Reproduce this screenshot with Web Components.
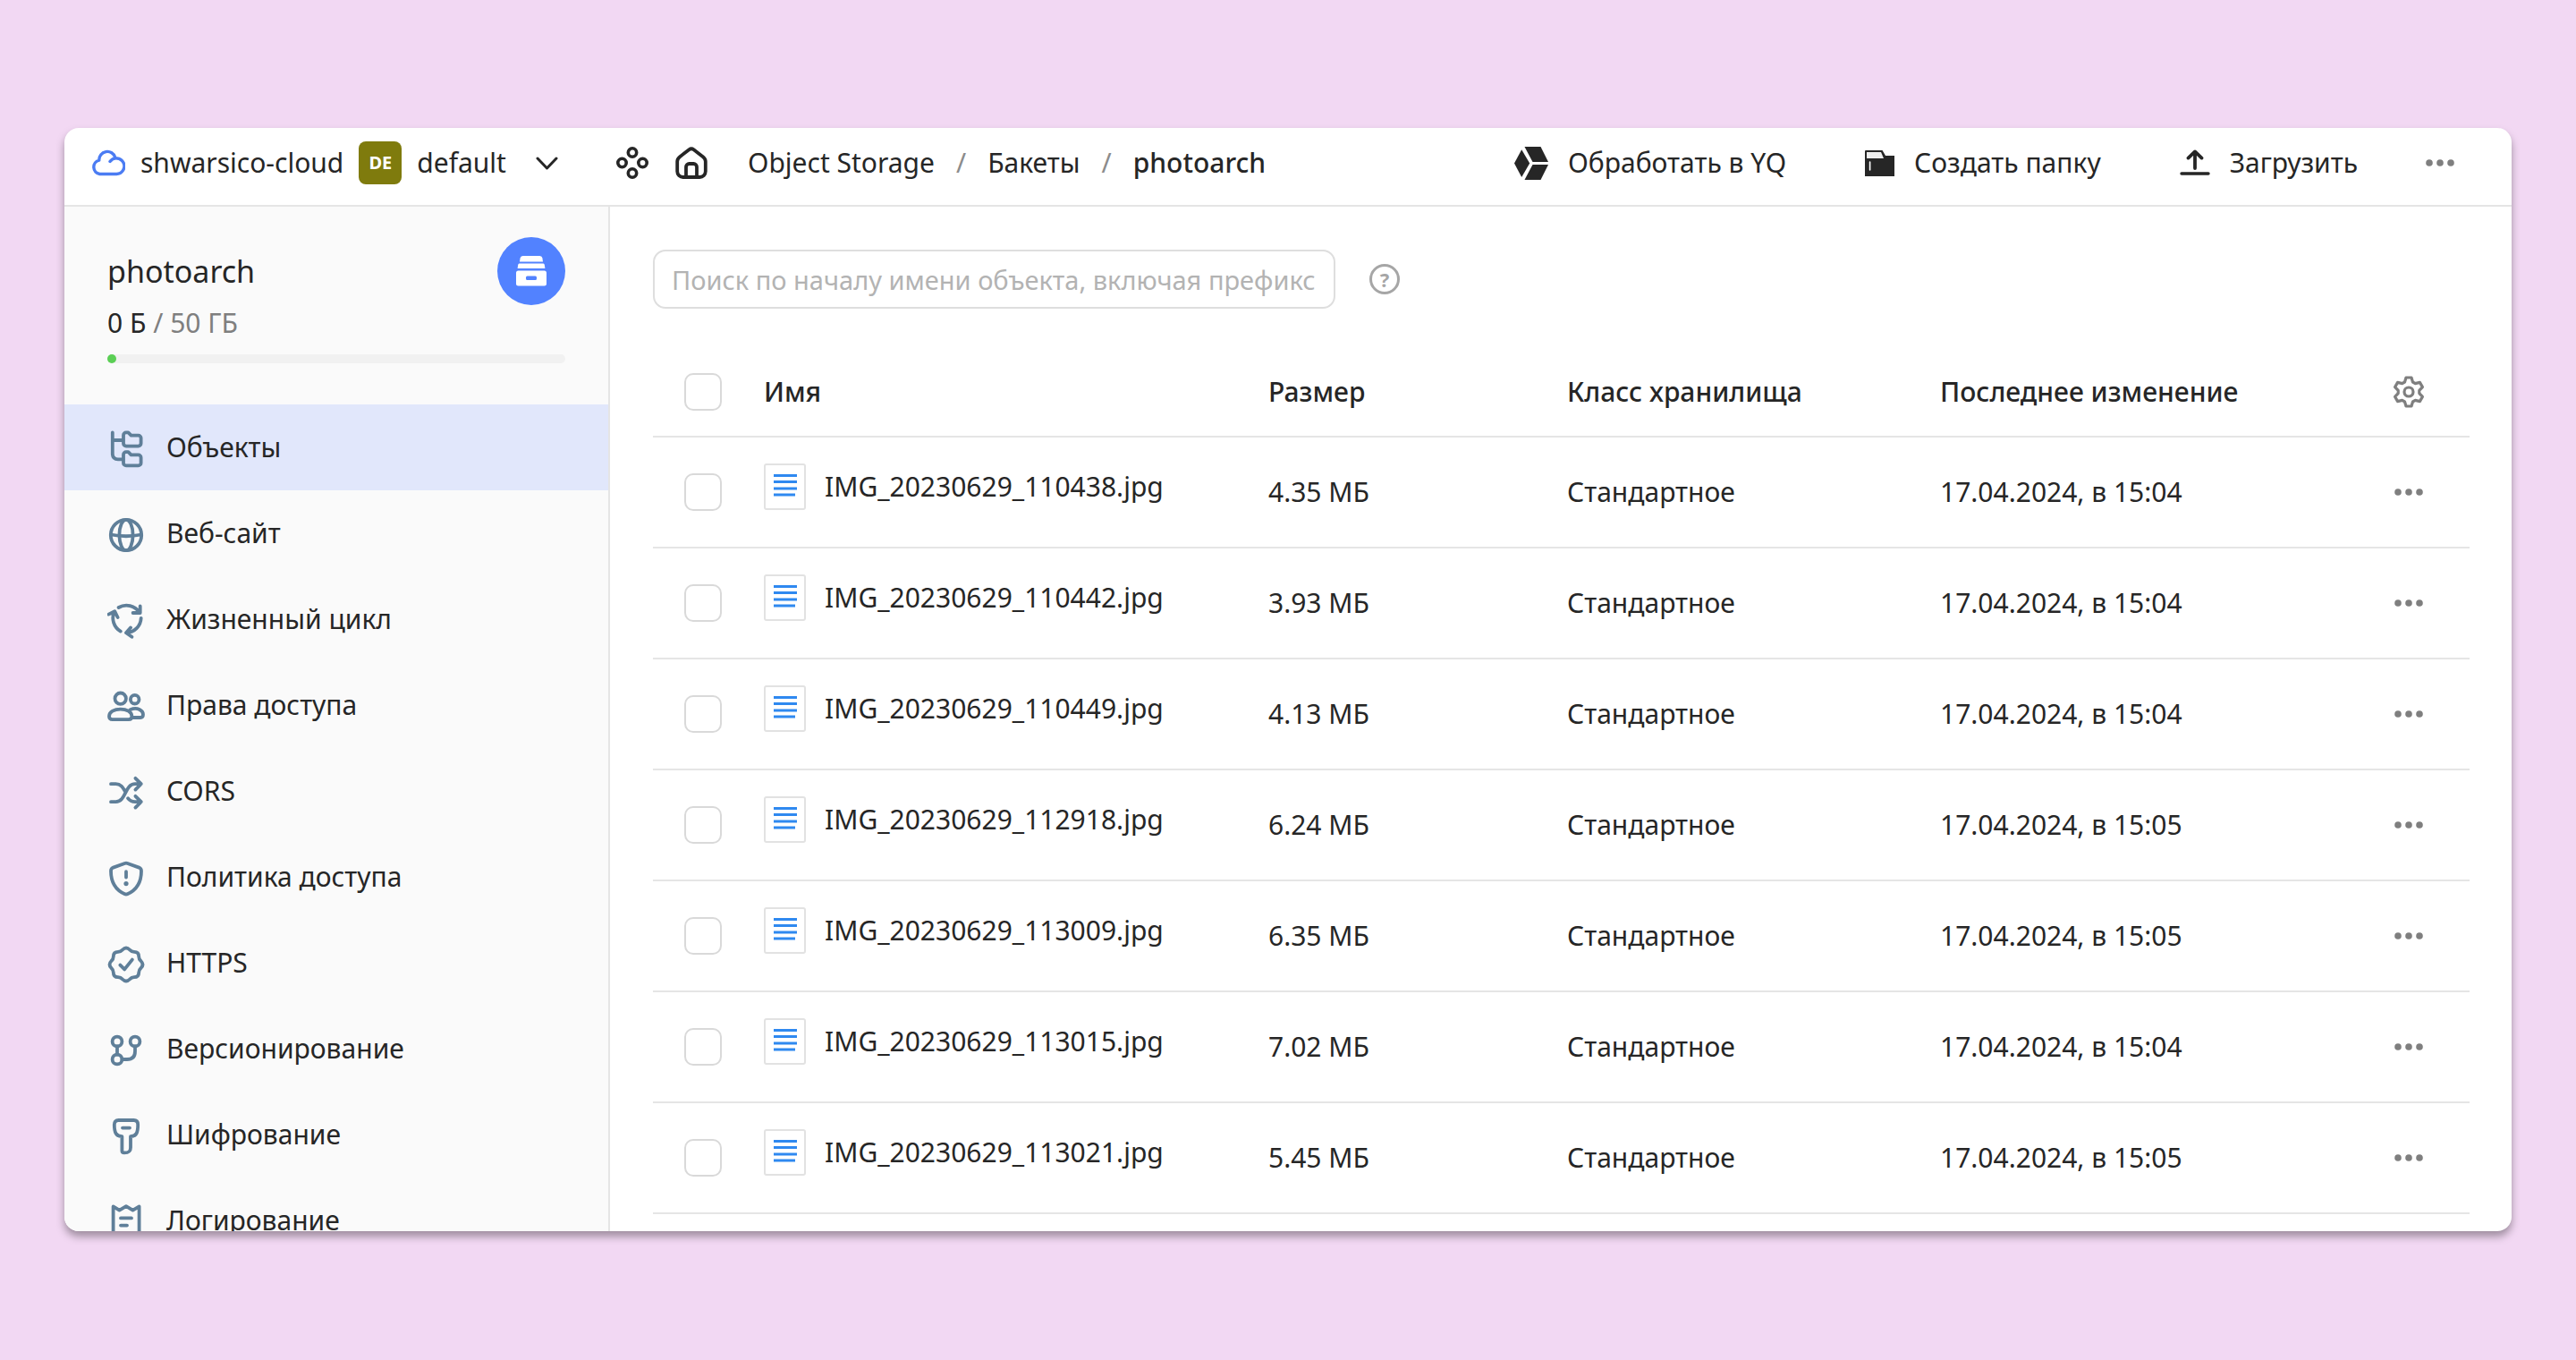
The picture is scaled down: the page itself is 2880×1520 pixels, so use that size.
<!DOCTYPE html>
<html lang="ru">
<head>
<meta charset="utf-8">
<meta name="viewport" content="width=device-width, initial-scale=1">
<title>photoarch — Object Storage</title>
<style>
    * { box-sizing: border-box; }

    body {
        margin: 0;
        min-height: 100vh;
        padding: 143px 72px 144px;
        background: #f2d8f3;
        color: #262626;
        font: 400 30px/40px "Noto Sans", "Open Sans", sans-serif;
        --line: #e5e5e5;
        --muted: #7f7f7f;
        --icon: #5f7f99;
    }
</style>
</head>
<body>

<storage-window>
    <console-header slot="header">
        <a slot="cloud" href="#cloud">shwarsico-cloud</a>
        <a slot="folder" href="#folder">default</a>
        <crumb-item href="#storage">Object Storage</crumb-item>
        <crumb-item href="#buckets">Бакеты</crumb-item>
        <crumb-item current>photoarch</crumb-item>
        <action-button slot="actions" icon="cube">Обработать в YQ</action-button>
        <action-button slot="actions" icon="folder">Создать папку</action-button>
        <action-button slot="actions" icon="upload">Загрузить</action-button>
    </console-header>

    <bucket-sidebar slot="sidebar" name="photoarch" used="0 Б" total="50 ГБ">
        <nav-item icon="tree" href="#objects" active>Объекты</nav-item>
        <nav-item icon="globe" href="#website">Веб-сайт</nav-item>
        <nav-item icon="cycle" href="#lifecycle">Жизненный цикл</nav-item>
        <nav-item icon="people" href="#access">Права доступа</nav-item>
        <nav-item icon="shuffle" href="#cors">CORS</nav-item>
        <nav-item icon="shield" href="#policy">Политика доступа</nav-item>
        <nav-item icon="badge" href="#https">HTTPS</nav-item>
        <nav-item icon="branch" href="#versioning">Версионирование</nav-item>
        <nav-item icon="key" href="#encryption">Шифрование</nav-item>
        <nav-item icon="log" href="#logging">Логирование</nav-item>
    </bucket-sidebar>

    <object-search></object-search>
    <object-table></object-table>
</storage-window>

<script>
// width, height, markup
const ICONS = {
    cloud: [38, 30, '<path stroke-width="3.4" d="M21 13.5A8.8 8.8 0 1 1 28 27.5H9.5A7.8 7.8 0 0 1 8.8 12.2A9.2 9.2 0 0 1 26.8 9"/>'],
    chevron: [25, 15, '<path stroke-width="3" d="M2 2 12.5 13 23 2"/>'],
    services: [36, 36, '<g stroke-width="3.6"><circle cx="18" cy="6.5" r="4.7"/><circle cx="6.5" cy="18" r="4.7"/><circle cx="29.5" cy="18" r="4.7"/><circle cx="18" cy="29.5" r="4.7"/></g>'],
    home: [36, 36, '<path stroke-width="3.8" d="M15.4 3.2Q18 1.2 20.6 3.2L31.2 11.4Q33.8 13.4 33.8 16.6V27.5A6.5 6.5 0 0 1 27.3 34H8.7A6.5 6.5 0 0 1 2.2 27.5V16.6Q2.2 13.4 4.8 11.4ZM12 34V22.5A3.5 3.5 0 0 1 15.5 19H20.5A3.5 3.5 0 0 1 24 22.5V34"/>'],
    cube: [38, 37, '<g fill="currentColor" stroke="none"><path d="M0 18.5 8.2 3.2 17.2 18.5 8.2 34Z"/><path d="M11.5 0H29.5L38 17H20.5Z"/><path d="M20.5 20H38L29.5 37H11.5Z"/></g>'],
    folder: [33, 29, '<path fill="currentColor" stroke="none" d="M0 1Q0 0 1 0H19.5L23 6H33V29H0Z"/><path fill="#eee" stroke="none" d="M2 2H18L21 9H2Z"/><path stroke="#fff" stroke-width="1.6" d="M5.6 13V22"/>'],
    upload: [34, 30, '<path stroke-width="3.8" d="M17 21V2.6M9.5 9.6 17 2.4 24.5 9.6"/><path stroke-width="3.4" d="M2 27H32"/>'],
    dots: [32, 8, '<g fill="currentColor" stroke="none"><circle cx="4" cy="4" r="3.8"/><circle cx="16" cy="4" r="3.8"/><circle cx="28" cy="4" r="3.8"/></g>'],
    gear: [36, 36, '<g stroke-width="3.2"><path d="M15 2H21L22.5 7 25.3 8.6 30.4 7.4 33.4 12.6 29.8 16.4V19.6L33.4 23.4 30.4 28.6 25.3 27.4 22.5 29 21 34H15L13.5 29 10.7 27.4 5.6 28.6 2.6 23.4 6.2 19.6V16.4L2.6 12.6 5.6 7.4 10.7 8.6 13.5 7Z"/><circle cx="18" cy="18" r="5"/></g>'],
    archive: [34, 34, '<g fill="currentColor" stroke="none"><path d="M7.5 0H26.5Q29 0 29.4 2.5L30 6.5H4L4.6 2.5Q5 0 7.5 0Z"/><path d="M3.5 8.5H30.5Q31.6 8.5 31.8 10L32.4 14H1.6L2.2 10Q2.4 8.5 3.5 8.5Z"/><path fill-rule="evenodd" d="M2.5 16.5H31.5Q34 16.5 34 19V31Q34 33.5 31.5 33.5H2.5Q0 33.5 0 31V19Q0 16.5 2.5 16.5ZM12.5 22.5Q11 22.5 11 24V25.5Q11 27 12.5 27H21.5Q23 27 23 25.5V24Q23 22.5 21.5 22.5Z"/></g>'],
    file: [47, 52, '<rect x="1" y="1" width="45" height="50" rx="2" fill="#fff" stroke="#e2e2e2" stroke-width="2"/><path stroke="#2f89f0" stroke-width="3" stroke-linecap="butt" d="M11 13.5H37M11 20.5H37M11 28H37M11 35H35"/>'],

    tree: [42, 42, '<path d="M5.8 2.5V26Q5.8 32.3 12 32.3H17.5M5.8 11H17.5"/><path d="M18 5.4A3 3 0 0 1 21 2.4H23.4L26.6 5.6H34.6A3 3 0 0 1 37.6 8.6V14.6A3 3 0 0 1 34.6 17.6H21A3 3 0 0 1 18 14.6ZM18 27.2A3 3 0 0 1 21 24.2H23.4L26.6 27.4H34.6A3 3 0 0 1 37.6 30.4V36.4A3 3 0 0 1 34.6 39.4H21A3 3 0 0 1 18 36.4Z"/>'],
    globe: [42, 42, '<circle cx="21" cy="21" r="17.2"/><ellipse cx="21" cy="21" rx="7.6" ry="17.2"/><path d="M4 20.5Q21 24 38 20.5"/>'],
    cycle: [42, 42, '<path d="M12.6 6A17.5 17.5 0 0 1 36 11.6M36.7 4.5V12H28.6M37.7 17.8A17 17 0 0 1 21.5 34.2M26 28.5 21 34.3 27.4 38.8M14.8 32.6A17.5 17.5 0 0 1 7.8 10.4M1.4 13.6 8.2 10.2 11.6 17"/>'],
    people: [42, 42, '<circle cx="14.7" cy="11.7" r="6.2"/><circle cx="30.7" cy="12.7" r="4.8"/><path d="M2 31.5C2 26.4 8 23.6 14.7 23.6S27.4 26.4 27.4 31.5Q27.4 35.2 23.8 35.2H5.6Q2 35.2 2 31.5ZM25.5 24.2C34 20.8 40 25.2 40 29.6Q40 33 37 33H28"/>'],
    shuffle: [42, 42, '<path d="M4 11.2H9.5C16 11.2 18 16.5 20.5 20.5M4 31.2H9.5C21 31.2 19.5 11.2 31 11.2H37.5M31.4 4.8 37.8 11.2 31.4 17.6M23 27.2Q26 31.2 31 31.2H37.5M31.4 24.8 37.8 31.2 31.4 37.6"/>'],
    shield: [42, 42, '<path d="M19.4 4Q21 3.4 22.6 4L35.4 8.6Q38 9.6 38 12.4C38 25 33 33.5 22.4 38.2Q21 38.8 19.6 38.2C9 33.5 4 25 4 12.4Q4 9.6 6.6 8.6ZM21 13.2V19.6"/><circle cx="21" cy="26.6" r="2.6" fill="currentColor" stroke="none"/>'],
    badge: [42, 42, '<path d="M17 4.5Q21 .5 25 4.5 27 6.8 30 6.8 35.2 6.8 35.2 12 35.2 15 37.5 17 41.5 21 37.5 25 35.2 27 35.2 30 35.2 35.2 30 35.2 27 35.2 25 37.5 21 41.5 17 37.5 15 35.2 12 35.2 6.8 35.2 6.8 30 6.8 27 4.5 25 .5 21 4.5 17 6.8 15 6.8 12 6.8 6.8 12 6.8 15 6.8 17 4.5ZM14.4 21.6 19.2 26.4 27.8 15.6"/>'],
    branch: [42, 42, '<circle cx="11" cy="11" r="5.4"/><circle cx="31" cy="11" r="5.4"/><circle cx="11" cy="31" r="5.4"/><path d="M11 16.5V25.5M31 16.5V22Q31 31 22 31H16.5"/>'],
    key: [42, 42, '<path d="M12.5 3H29.5Q34.2 3 34.2 8C34.2 16.5 32.6 21 26 21.2V33.6C26 38 24 39.4 19 39.4Q16.4 39.4 16.4 37V21.2C9.6 21 7.8 16.5 7.8 8Q7.8 3 12.5 3ZM17 11.6H25"/>'],
    log: [42, 42, '<path d="M6.6 3.4 13.5 7.6 21 3.2 28.5 7.6 35.6 3.4V38.4L28.5 34.4 21 38.4 13.5 34.4 6.6 38.4ZM15 16.4H27M15 24.6H22"/>']
};

class UiIcon extends HTMLElement {
    connectedCallback() {
        const [w, h, body] = ICONS[this.getAttribute('name')];
        this.attachShadow({ mode: 'open' }).innerHTML = `
            <style>
                :host { display: block; flex: none; }
                svg { display: block; }
            </style>
            <svg width="${w}" height="${h}" viewBox="0 0 ${w} ${h}" fill="none" stroke="currentColor"
                stroke-width="3.8" stroke-linecap="round" stroke-linejoin="round" aria-hidden="true">${body}</svg>
        `;
    }
}

class StorageWindow extends HTMLElement {
    constructor() {
        super();
        this.attachShadow({ mode: 'open' }).innerHTML = `
            <style>
                :host {
                    display: grid;
                    grid-template: auto minmax(0, 1fr) / 610px minmax(0, 1fr);
                    height: calc(100vh - 287px);
                    overflow: hidden;
                    border-radius: 16px;
                    background: #fff;
                    box-shadow: 0 6px 10px rgba(0, 0, 0, .35);
                }
                header { grid-column: 1 / -1; border-bottom: 2px solid var(--line); }
                aside { overflow: hidden; background: #fafafa; border-right: 2px solid var(--line); }
                main { overflow: hidden; padding: 48px 47px 0 48px; }
            </style>
            <header><slot name="header"></slot></header>
            <aside><slot name="sidebar"></slot></aside>
            <main><slot></slot></main>
        `;
    }
}

class ConsoleHeader extends HTMLElement {
    constructor() {
        super();
        this.attachShadow({ mode: 'open' }).innerHTML = `
            <style>
                :host {
                    display: flex;
                    align-items: center;
                    justify-content: space-between;
                    height: 86px;
                    padding: 0 64px 8px 30px;
                }
                nav, .place, .tools, .crumbs, .actions { display: flex; align-items: center; }
                nav { gap: 65px; }
                .place { gap: 17px; }
                .tools { gap: 30px; }
                .crumbs { gap: 24px; margin-left: 15px; }
                .actions { gap: 88px; }
                .cloud { color: #4b7cf3; }
                .avatar {
                    width: 48px;
                    border-radius: 8px;
                    background: #7f7b0d;
                    color: #fff;
                    font: 700 20px/48px "Noto Sans", sans-serif;
                    text-align: center;
                }
                ::slotted(a) { color: inherit; text-decoration: none; }
                button { padding: 0; border: 0; background: none; color: inherit; }
                .open { margin-left: 16px; }
                .more { margin-left: -12px; color: var(--muted); }
            </style>
            <nav>
                <div class="place">
                    <ui-icon class="cloud" name="cloud"></ui-icon>
                    <slot name="cloud"></slot>
                    <span class="avatar">DE</span>
                    <slot name="folder"></slot>
                    <button class="open" type="button" aria-label="Выбрать каталог"><ui-icon name="chevron"></ui-icon></button>
                </div>
                <div class="tools">
                    <button type="button" aria-label="Все сервисы"><ui-icon name="services"></ui-icon></button>
                    <button type="button" aria-label="Главная"><ui-icon name="home"></ui-icon></button>
                    <div class="crumbs"><slot></slot></div>
                </div>
            </nav>
            <div class="actions">
                <slot name="actions"></slot>
                <button class="more" type="button" aria-label="Ещё"><ui-icon name="dots"></ui-icon></button>
            </div>
        `;
    }
}

class CrumbItem extends HTMLElement {
    connectedCallback() {
        const current = this.hasAttribute('current');
        this.attachShadow({ mode: 'open' }).innerHTML = `
            <style>
                :host { display: flex; gap: 24px; }
                a { color: inherit; text-decoration: none; }
                b { font-weight: 500; }
                .sep { color: #8c8c8c; }
            </style>
            ${current
                ? '<b aria-current="page"><slot></slot></b>'
                : `<a href="${this.getAttribute('href')}"><slot></slot></a><span class="sep">/</span>`}
        `;
    }
}

class ActionButton extends HTMLElement {
    connectedCallback() {
        this.attachShadow({ mode: 'open' }).innerHTML = `
            <style>
                :host { display: block; }
                button {
                    display: flex;
                    align-items: center;
                    gap: 22px;
                    padding: 0;
                    border: 0;
                    background: none;
                    color: inherit;
                    font: inherit;
                }
            </style>
            <button type="button"><ui-icon name="${this.getAttribute('icon')}"></ui-icon><slot></slot></button>
        `;
    }
}

class BucketSidebar extends HTMLElement {
    connectedCallback() {
        this.attachShadow({ mode: 'open' }).innerHTML = `
            <style>
                :host { display: block; }
                .info { padding: 34px 48px 46px; }
                .title { display: flex; align-items: center; justify-content: space-between; }
                h1 { margin: 0; font-size: 34px; font-weight: 400; }
                .logo {
                    display: grid;
                    place-items: center;
                    width: 76px;
                    height: 76px;
                    border-radius: 50%;
                    background: #5282ff;
                    color: #fff;
                }
                .usage { color: var(--muted); }
                .usage span { color: #262626; }
                .bar { height: 10px; margin-top: 15px; border-radius: 5px; background: #f1f1f1; }
                .fill { width: 10px; height: 10px; border-radius: 5px; background: #5bcf55; }
            </style>
            <div class="info">
                <div class="title">
                    <h1>${this.getAttribute('name')}</h1>
                    <div class="logo"><ui-icon name="archive"></ui-icon></div>
                </div>
                <div class="usage"><span>${this.getAttribute('used')}</span> / ${this.getAttribute('total')}</div>
                <div class="bar"><div class="fill"></div></div>
            </div>
            <nav><slot></slot></nav>
        `;
    }
}

class NavItem extends HTMLElement {
    connectedCallback() {
        this.attachShadow({ mode: 'open' }).innerHTML = `
            <style>
                :host { display: block; }
                :host([active]) { background: #e1e7fb; }
                a {
                    display: flex;
                    align-items: center;
                    gap: 24px;
                    height: 96px;
                    padding-left: 48px;
                    color: inherit;
                    text-decoration: none;
                }
                ui-icon { margin-top: 4px; color: var(--icon); }
            </style>
            <a href="${this.getAttribute('href')}"><ui-icon name="${this.getAttribute('icon')}"></ui-icon><slot></slot></a>
        `;
    }
}

class ObjectSearch extends HTMLElement {
    constructor() {
        super();
        this.attachShadow({ mode: 'open' }).innerHTML = `
            <style>
                :host { display: flex; align-items: center; gap: 38px; }
                input {
                    box-sizing: border-box;
                    width: 763px;
                    height: 66px;
                    padding: 0 19px;
                    border: 2px solid #dedede;
                    border-radius: 14px;
                    background: #fff;
                    color: inherit;
                    font: inherit;
                    font-size: 29px;
                }
                input::placeholder { color: #b3b3b3; opacity: 1; }
                button {
                    box-sizing: border-box;
                    width: 34px;
                    height: 34px;
                    padding: 0;
                    border: 3px solid #a6a6a6;
                    border-radius: 50%;
                    background: none;
                    color: #a6a6a6;
                    font: 700 22px/28px "Noto Sans", sans-serif;
                }
            </style>
            <input type="text" aria-label="Поиск объекта" placeholder="Поиск по началу имени объекта, включая префиксы">
            <button type="button" aria-label="Справка">?</button>
        `;
    }
}

const OBJECTS = [
    ['IMG_20230629_110438.jpg', '4.35 МБ', '15:04'],
    ['IMG_20230629_110442.jpg', '3.93 МБ', '15:04'],
    ['IMG_20230629_110449.jpg', '4.13 МБ', '15:04'],
    ['IMG_20230629_112918.jpg', '6.24 МБ', '15:05'],
    ['IMG_20230629_113009.jpg', '6.35 МБ', '15:05'],
    ['IMG_20230629_113015.jpg', '7.02 МБ', '15:04'],
    ['IMG_20230629_113021.jpg', '5.45 МБ', '15:05']
];

class ObjectTable extends HTMLElement {
    constructor() {
        super();
        const rows = OBJECTS.map(([name, size, time]) => `
            <tr>
                <td class="check"><input type="checkbox" aria-label="${name}"></td>
                <td class="name"><a href="#${name}"><ui-icon name="file"></ui-icon>${name}</a></td>
                <td>${size}</td>
                <td>Стандартное</td>
                <td>17.04.2024, в ${time}</td>
                <td><button type="button" aria-label="Действия"><ui-icon name="dots"></ui-icon></button></td>
            </tr>`).join('');

        this.attachShadow({ mode: 'open' }).innerHTML = `
            <style>
                :host { display: block; margin-top: 44px; }
                table { width: 100%; border-collapse: separate; border-spacing: 0; table-layout: fixed; }
                th, td {
                    box-sizing: border-box;
                    padding: 0;
                    border-bottom: 2px solid var(--line);
                    text-align: left;
                    vertical-align: middle;
                }
                th { height: 100px; font-weight: 500; }
                td { height: 124px; }
                .check { width: 124px; padding-right: 12px; }
                .size { width: 334px; }
                .class { width: 417px; }
                .date { width: 456px; }
                .menu { width: 136px; }
                .name { padding-bottom: 12px; }
                a { display: flex; align-items: center; gap: 21px; color: inherit; text-decoration: none; }
                input {
                    appearance: none;
                    display: block;
                    box-sizing: border-box;
                    width: 42px;
                    height: 42px;
                    margin: 0 auto;
                    border: 2px solid #d9d9d9;
                    border-radius: 10px;
                    background: #fff;
                }
                button {
                    display: block;
                    margin: 0 auto;
                    padding: 0;
                    border: 0;
                    background: none;
                    color: var(--muted);
                }
            </style>
            <table>
                <thead>
                    <tr>
                        <th class="check"><input type="checkbox" aria-label="Выбрать все"></th>
                        <th>Имя</th>
                        <th class="size">Размер</th>
                        <th class="class">Класс хранилища</th>
                        <th class="date">Последнее изменение</th>
                        <th class="menu"><button type="button" aria-label="Настройки"><ui-icon name="gear"></ui-icon></button></th>
                    </tr>
                </thead>
                <tbody>${rows}</tbody>
            </table>
        `;
    }
}

customElements.define('ui-icon', UiIcon);
customElements.define('storage-window', StorageWindow);
customElements.define('console-header', ConsoleHeader);
customElements.define('crumb-item', CrumbItem);
customElements.define('action-button', ActionButton);
customElements.define('bucket-sidebar', BucketSidebar);
customElements.define('nav-item', NavItem);
customElements.define('object-search', ObjectSearch);
customElements.define('object-table', ObjectTable);
</script>
</body>
</html>
